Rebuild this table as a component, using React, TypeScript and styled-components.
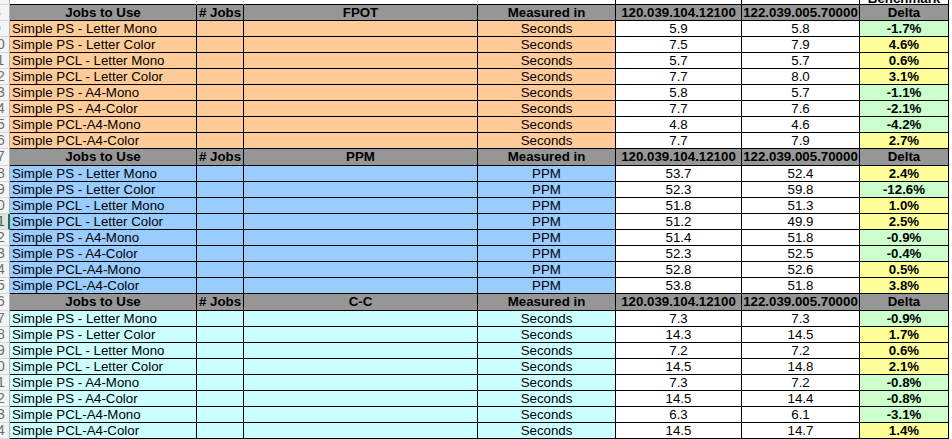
import React from 'react'
import styled, { createGlobalStyle } from 'styled-components'

const GlobalStyle = createGlobalStyle`
  html, body {
    margin: 0;
    padding: 0;
    background: #ffffff;
  }
  body {
    font-family: 'Liberation Sans', Arial, sans-serif;
  }
`

type Section = {
  title: string
  unit: string
  color: string
  header: number
  headHeight: number
  rows: [string, string, string][]
}

const JOBS = [
  'Simple PS - Letter Mono',
  'Simple PS - Letter Color',
  'Simple PCL - Letter Mono',
  'Simple PCL - Letter Color',
  'Simple PS - A4-Mono',
  'Simple PS - A4-Color',
  'Simple PCL-A4-Mono',
  'Simple PCL-A4-Color',
]

const SECTIONS: Section[] = [
  {
    title: 'FPOT',
    unit: 'Seconds',
    color: '#ffcc99',
    header: 8,
    headHeight: 16,
    rows: [
      ['5.9', '5.8', '-1.7%'],
      ['7.5', '7.9', '4.6%'],
      ['5.7', '5.7', '0.6%'],
      ['7.7', '8.0', '3.1%'],
      ['5.8', '5.7', '-1.1%'],
      ['7.7', '7.6', '-2.1%'],
      ['4.8', '4.6', '-4.2%'],
      ['7.7', '7.9', '2.7%'],
    ],
  },
  {
    title: 'PPM',
    unit: 'PPM',
    color: '#99ccff',
    header: 17,
    headHeight: 17,
    rows: [
      ['53.7', '52.4', '2.4%'],
      ['52.3', '59.8', '-12.6%'],
      ['51.8', '51.3', '1.0%'],
      ['51.2', '49.9', '2.5%'],
      ['51.4', '51.8', '-0.9%'],
      ['52.3', '52.5', '-0.4%'],
      ['52.8', '52.6', '0.5%'],
      ['53.8', '51.8', '3.8%'],
    ],
  },
  {
    title: 'C-C',
    unit: 'Seconds',
    color: '#ccffff',
    header: 26,
    headHeight: 17,
    rows: [
      ['7.3', '7.3', '-0.9%'],
      ['14.3', '14.5', '1.7%'],
      ['7.2', '7.2', '0.6%'],
      ['14.5', '14.8', '2.1%'],
      ['7.3', '7.2', '-0.8%'],
      ['14.5', '14.4', '-0.8%'],
      ['6.3', '6.1', '-3.1%'],
      ['14.5', '14.7', '1.4%'],
    ],
  },
]

const SELECTED_ROW = 21

const App = () => {
  return (
    <>
      <GlobalStyle />
      <Sheet>
        <Grid>
          <Row $height={5}>
            <RowHead $selected={false} />
            <TopCell $dark={false} />
            <TopCell $dark={false} />
            <TopCell $dark={false} />
            <TopCell $dark={true} />
            <TopCell $dark={true} />
            <TopCell $dark={true} />
            <TopCell $dark={true}>
              <Clipped>Benchmark</Clipped>
            </TopCell>
            <Filler />
          </Row>
          {SECTIONS.map(section => (
            <React.Fragment key={section.title}>
              <Row $height={section.headHeight}>
                <RowHead $selected={false}>{section.header}</RowHead>
                <HeadCell>Jobs to Use</HeadCell>
                <HeadCell># Jobs</HeadCell>
                <HeadCell>{section.title}</HeadCell>
                <HeadCell>Measured in</HeadCell>
                <HeadCell>120.039.104.12100</HeadCell>
                <HeadCell>122.039.005.70000</HeadCell>
                <HeadCell>Delta</HeadCell>
                <Filler />
              </Row>
              {section.rows.map((r, i) => {
                const num = section.header + 1 + i
                const negative = r[2].startsWith('-')
                return (
                  <Row key={num} $height={16}>
                    <RowHead $selected={num === SELECTED_ROW}>{num}</RowHead>
                    <Cell $bg={section.color} $align="left">
                      {JOBS[i]}
                    </Cell>
                    <Cell $bg={section.color} />
                    <Cell $bg={section.color} />
                    <Cell $bg={section.color}>{section.unit}</Cell>
                    <Cell>{r[0]}</Cell>
                    <Cell>{r[1]}</Cell>
                    <Cell $bg={negative ? '#ccffcc' : '#ffff99'} $bold>
                      {r[2]}
                    </Cell>
                    <Filler />
                  </Row>
                )
              })}
            </React.Fragment>
          ))}
        </Grid>
      </Sheet>
    </>
  )
}
export default App

const Sheet = styled.div`
  width: 952px;
  height: 439px;
  overflow: hidden;
  background: #ffffff;
`

const Grid = styled.div`
  margin-left: -17px;
  display: flex;
  flex-direction: column;
`

const Row = styled.div<{ $height: number }>`
  display: grid;
  grid-template-columns: 27px 187px 47px 234px 138px 126px 118px 89px 60px;
  height: ${p => p.$height}px;
`

const RowHead = styled.div<{ $selected: boolean }>`
  box-sizing: border-box;
  background: ${p => (p.$selected ? '#e2e2e2' : '#f4f4f4')};
  border-bottom: 1px solid #d6d6d6;
  border-right: ${p => (p.$selected ? '2px solid #217346' : '1px solid #b4b4b4')};
  color: ${p => (p.$selected ? '#217346' : '#6e6e6e')};
  font-size: 14px;
  line-height: 15px;
  text-align: center;
  padding-left: ${p => (p.$selected ? '3px' : '2px')};
  overflow: hidden;
  white-space: nowrap;
`

const Cell = styled.div<{ $bg?: string; $align?: 'left' | 'center'; $bold?: boolean }>`
  box-sizing: border-box;
  background: ${p => p.$bg || '#ffffff'};
  border-right: 1px solid #000000;
  border-bottom: 1px solid #000000;
  color: #000000;
  font-size: 13.3px;
  font-weight: ${p => (p.$bold ? 700 : 400)};
  line-height: 15px;
  text-align: ${p => p.$align || 'center'};
  padding-left: ${p => (p.$align === 'left' ? '2px' : '0')};
  white-space: nowrap;
  overflow: hidden;
`

const HeadCell = styled(Cell)`
  background: #969696;
  font-weight: 700;
  text-align: center;
  padding-left: 0;
`

const TopCell = styled.div<{ $dark: boolean }>`
  box-sizing: border-box;
  background: #ffffff;
  border-right: 1px solid ${p => (p.$dark ? '#000000' : '#d4d4d4')};
  border-bottom: 1px solid #000000;
  overflow: hidden;
`

const Clipped = styled.div`
  margin-top: -9px;
  font-size: 13.3px;
  font-weight: 700;
  line-height: 15px;
  text-align: center;
  color: #000000;
  white-space: nowrap;
`

const Filler = styled.div`
  background: #ffffff;
`
